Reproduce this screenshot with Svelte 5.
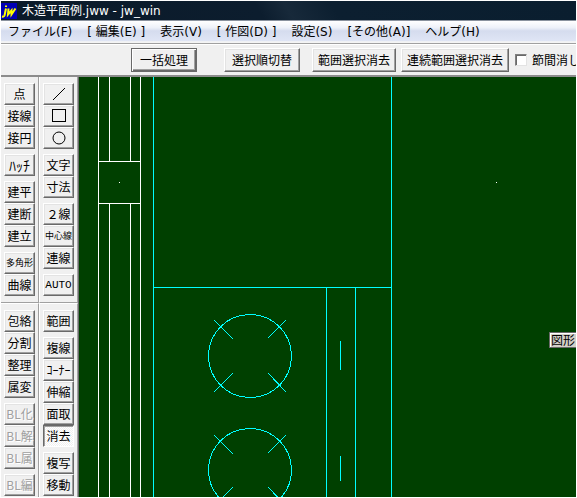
<script lang="ts">
  interface Tool {
    label: string;
    icon?: 'line' | 'rect' | 'circle';
    size?: 'small' | 'large' | 'latin';
    disabled?: boolean;
  }

  const menus = ['ファイル(F)', '[ 編集(E) ]', '表示(V)', '[ 作図(D) ]', '設定(S)', '[その他(A)]', 'ヘルプ(H)'];

  // Each toolbar is a list of groups, a group is a run of touching buttons
  const toolbars: Tool[][][] = [
    [
      [{ label: '点' }, { label: '接線' }, { label: '接円' }],
      [{ label: 'ﾊｯﾁ', size: 'large' }],
      [{ label: '建平' }, { label: '建断' }, { label: '建立' }],
      [{ label: '多角形', size: 'small' }, { label: '曲線' }],
    ],
    [
      [
        { label: '線', icon: 'line' },
        { label: '矩形', icon: 'rect' },
        { label: '円', icon: 'circle' },
      ],
      [{ label: '文字' }, { label: '寸法' }],
      [{ label: '２線' }, { label: '中心線', size: 'small' }, { label: '連線' }],
      [{ label: 'AUTO', size: 'latin' }],
    ],
    [
      [{ label: '包絡' }, { label: '分割' }, { label: '整理' }, { label: '属変' }],
      [
        { label: 'BL化', disabled: true },
        { label: 'BL解', disabled: true },
        { label: 'BL属', disabled: true },
      ],
      [{ label: 'BL編', disabled: true }],
    ],
    [
      [{ label: '範囲' }],
      [{ label: '複線' }, { label: 'ｺｰﾅｰ' }, { label: '伸縮' }, { label: '面取' }, { label: '消去' }],
      [{ label: '複写' }, { label: '移動' }],
    ],
  ];

  let active = $state('消去');
  let keepBetween = $state(false);
</script>

<div class="window">
  <header class="title">
    <svg class="logo" width="16" height="16" viewBox="0 0 16 16" aria-hidden="true">
      <rect width="16" height="16" fill="#0000b4" />
      <g fill="none" stroke="#ffff00" stroke-width="2">
        <path d="M5 2.5v1.5M5 5.5L3.5 12.5Q3 14 1 13.5" />
        <path d="M7.5 5.5L7 11.5L10.5 7.5L10.5 11.5L14.5 5.5" />
      </g>
    </svg>
    <span>木造平面例.jww - jw_win</span>
  </header>

  <nav class="menu">
    {#each menus as menu}
      <button type="button">{menu}</button>
    {/each}
  </nav>

  <div class="control-bar">
    <button class="raised default" type="button">一括処理</button>
    <button class="raised order" type="button">選択順切替</button>
    <button class="raised range" type="button">範囲選択消去</button>
    <button class="raised" type="button">連続範囲選択消去</button>
    <label class="check">
      <input type="checkbox" bind:checked={keepBetween} />
      節間消し
    </label>
  </div>

  <main class="work">
    <div class="tools">
      {#each toolbars as groups}
        <div class="toolbar">
          {#each groups as group}
            <div class="group">
              {#each group as tool}
                <button
                  class="raised tool {tool.size ?? ''}"
                  class:active={active === tool.label}
                  type="button"
                  disabled={tool.disabled}
                  aria-label={tool.label}
                  onclick={() => (active = tool.label)}
                >
                  {#if tool.icon}
                    <svg width="14" height="14" viewBox="0 0 14 14" fill="none" stroke="#000">
                      {#if tool.icon === 'line'}
                        <path d="M1 13L13 1" />
                      {:else if tool.icon === 'rect'}
                        <rect x="0.5" y="0.5" width="13" height="12" />
                      {:else}
                        <circle cx="7" cy="7" r="6" />
                      {/if}
                    </svg>
                  {:else}
                    {tool.label}
                  {/if}
                </button>
              {/each}
            </div>
          {/each}
        </div>
      {/each}
    </div>

    <div class="canvas">
      <svg class="drawing" width="100%" height="100%" fill="none" shape-rendering="crispEdges">
        <!-- wall and column -->
        <g stroke="#fff">
          <path d="M19.5 0V500M61.5 0V500" />
          <path d="M30.5 0V84M51.5 0V84M30.5 127V500M51.5 127V500" />
          <path d="M19 84.5H62M19 126.5H62" />
        </g>
        <g fill="#fff">
          <rect x="40" y="105" width="1" height="1" />
          <rect x="417" y="105" width="1" height="1" />
        </g>
        <!-- kitchen counter -->
        <g stroke="#00ffff">
          <path d="M74.5 0V500M312.5 0V500M74 210.5H313" />
          <path d="M247.5 210V500M276.5 210V500" />
          <path d="M261.5 264V293M261.5 379V404" />
          {#each [279, 393] as cy}
            <circle cx="171" {cy} r="41.5" />
          {/each}
          <path d="M135 243L154 262M207 243L189 261M135 315L154 296M207 315L189 296" />
          <path d="M135 358L154 377M207 358L189 376M135 429L154 410M207 429L189 410" />
        </g>
      </svg>
      <div class="floating">図形</div>
    </div>
  </main>
</div>

<style>
  :global(body) {
    margin: 0;
    background: #fff;
  }

  .window {
    margin: 1px;
    overflow: hidden;
    background: #f0f0f0;
    color: #000;
    font-family: 'Noto Sans CJK JP', sans-serif;
    font-size: 12px;
    line-height: 16px;
  }

  button {
    margin: 0;
    padding: 0;
    border: 0;
    background: none;
    color: inherit;
    font: inherit;
    white-space: nowrap;
  }

  .title {
    display: flex;
    align-items: center;
    gap: 5px;
    height: 20px;
    border-bottom: 1px solid #8a929e;
    box-sizing: border-box;
    background: linear-gradient(60deg, #0b1a29 0%, #0c1d2e 45%, #17293a 50%, #0c1f30 58%, #0a1e2f 100%);
    color: #fff;
    font-family: 'DejaVu Sans', 'Noto Sans CJK JP', sans-serif;
  }

  .logo {
    flex: none;
  }

  .menu {
    display: flex;
    gap: 15px;
    height: 23px;
    padding-left: 7px;
    box-sizing: border-box;
    border-bottom: 1px solid #a0a0a0;
    background: linear-gradient(#fff 0%, #eef1f9 30%, #d5dcee 45%, #dfe5f5 90%, #f4f4f4 94%);
    font-family: 'DejaVu Sans', 'Noto Sans CJK JP', sans-serif;
  }

  .control-bar {
    display: flex;
    align-items: center;
    height: 33px;
    padding-left: 130px;
    box-sizing: border-box;
    border-top: 1px solid #fff;
    border-bottom: 2px solid #8c8c8c;
    white-space: nowrap;
  }

  .raised {
    flex: none;
    box-sizing: border-box;
    height: 24px;
    padding: 0 5px;
    border: 1px solid;
    border-color: #fff #696969 #696969 #fff;
    background: #f0f0f0;
    box-shadow: inset -1px -1px #a0a0a0, inset 1px 1px #e3e3e3;
  }

  .default {
    margin-right: 27px;
    padding: 0 8px;
    border: 1px solid #696969;
    box-shadow: inset 1px 1px #fff, inset -1px -1px #696969, inset -2px -2px #a0a0a0;
  }

  .order {
    margin-right: 12px;
    padding: 0 7px;
  }

  .range {
    margin-right: 5px;
  }

  .check {
    display: flex;
    align-items: center;
    gap: 5px;
    margin-left: 6px;
  }

  .check input {
    width: 12px;
    height: 12px;
    margin: 0;
    box-sizing: border-box;
    border: 1px solid;
    border-color: #808080 #e3e3e3 #e3e3e3 #808080;
    background: #fff;
    appearance: none;
    box-shadow: inset 1px 1px #696969;
  }

  .check input:checked {
    background: #696969;
  }

  .work {
    display: flex;
    align-items: stretch;
  }

  .tools {
    display: grid;
    grid-template-columns: 38px 39px;
    flex: none;
  }

  .toolbar {
    display: flex;
    flex-direction: column;
    gap: 5px;
    padding: 6px 0 6px 3px;
    border-right: 1px solid #a0a0a0;
    border-bottom: 1px solid #a0a0a0;
  }

  .toolbar:nth-child(even) {
    border-left: 1px solid #fff;
  }

  .toolbar:nth-child(n + 3) {
    padding-bottom: 1px;
    border-top: 1px solid #fff;
    border-bottom: 0;
  }

  .group {
    display: flex;
    flex-direction: column;
  }

  .tool {
    display: flex;
    align-items: center;
    justify-content: center;
    width: 31px;
    height: 22px;
    padding: 0;
  }

  .tool:disabled {
    color: #a0a0a0;
    text-shadow: 1px 1px #fff;
  }

  .small {
    font-size: 9px;
  }

  .large {
    font-size: 14px;
  }

  .latin {
    font-family: 'Liberation Mono', monospace;
    font-size: 11px;
  }

  .active {
    border-color: #696969 #fff #fff #696969;
    background: repeating-conic-gradient(#fff 0 25%, #f0f0f0 0 50%) 0 0 / 2px 2px;
    box-shadow: inset 1px 1px #a0a0a0;
  }

  .canvas {
    position: relative;
    flex: 1;
    min-width: 0;
    overflow: hidden;
    border-left: 1px solid #696969;
    background: #004000;
  }

  .drawing {
    position: absolute;
    inset: 0;
  }

  .floating {
    position: absolute;
    top: 255px;
    left: 470px;
    width: 60px;
    height: 16px;
    box-sizing: border-box;
    padding-left: 1px;
    border: 1px solid #696969;
    background: #d4d0c8;
    line-height: 14px;
    box-shadow: inset 1px 1px #fff;
  }
</style>
